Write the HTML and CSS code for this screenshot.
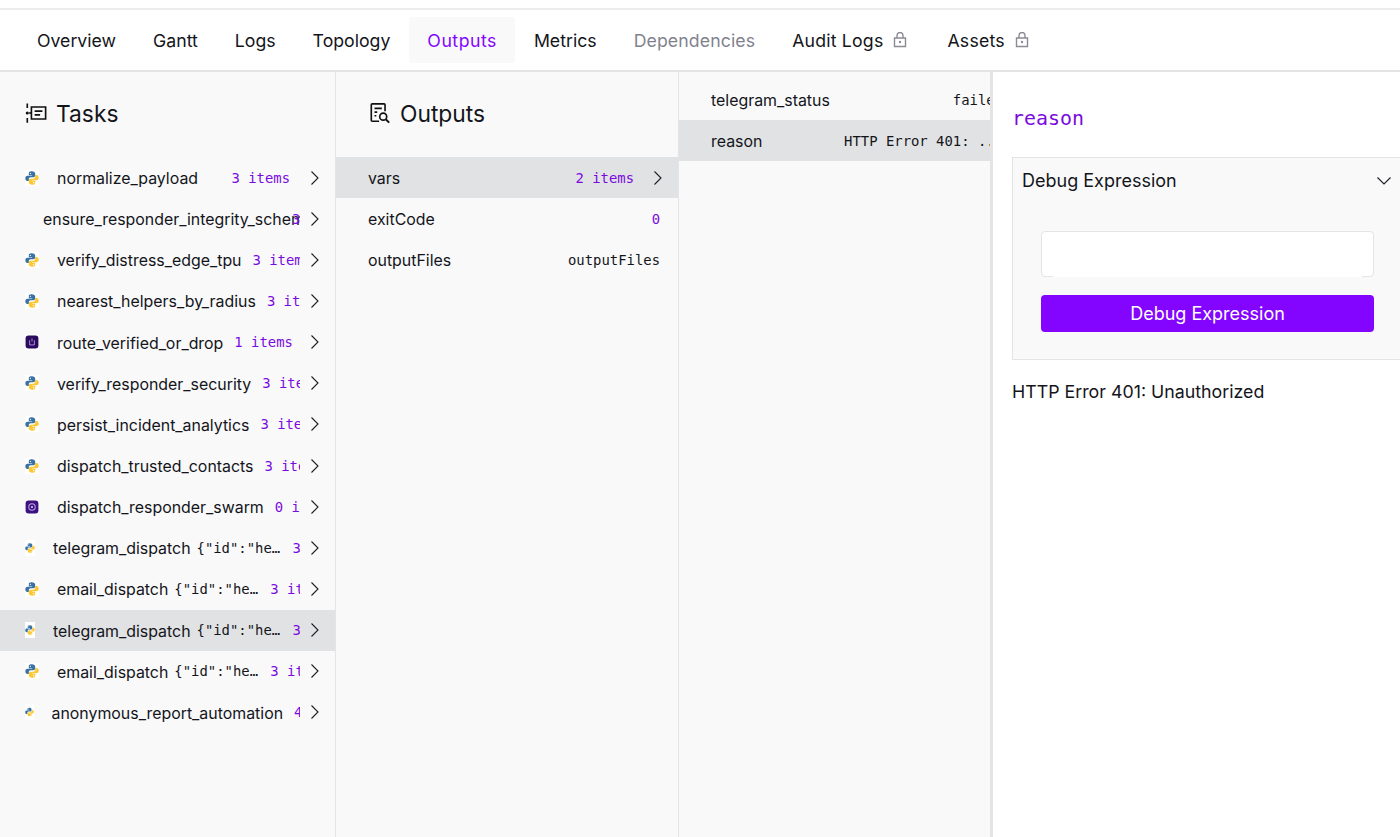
FILE: index.html
```html
<!DOCTYPE html>
<html lang="en">
<head>
    <meta charset="UTF-8">
    <title>Outputs</title>
    <link rel="stylesheet" href="styles.css">
</head>
<body>
    <svg class="defs" width="0" height="0">
        <symbol id="python" viewBox="1 1 22 22">
            <path fill="#3a72a6" d="M12 1.500C7 1.500 7 3.500 7 5v2.500h5.200v1H4.800C2.600 8.500 1.500 10 1.500 12.500s1.100 4.300 3.300 4.300H7v-3c0-1.700 1.300-2.900 3-2.900h4.300c1.500 0 2.700-1.200 2.700-2.700V5c0-1.800-2-3.500-5-3.500zM9.500 3.700a1 1 0 1 1 0 2 1 1 0 0 1 0-2z"/>
            <path fill="#fbc934" transform="rotate(180 12 12)" d="M12 1.500C7 1.500 7 3.500 7 5v2.500h5.200v1H4.800C2.600 8.500 1.500 10 1.500 12.500s1.100 4.300 3.300 4.300H7v-3c0-1.700 1.300-2.900 3-2.900h4.300c1.500 0 2.700-1.200 2.700-2.700V5c0-1.800-2-3.500-5-3.500zM9.500 3.700a1 1 0 1 1 0 2 1 1 0 0 1 0-2z"/>
        </symbol>
        <symbol id="chevron" viewBox="0 0 10 16">
            <path d="M1.500 1.500 8 8l-6.500 6.500" fill="none" stroke="#1c1d22" stroke-width="1.100"/>
        </symbol>
        <symbol id="lock" viewBox="0 0 14 16">
            <path d="M1.500 6h11v8.500h-11zM4 6V3.500a3 3 0 0 1 6 0V6" fill="none" stroke="#8b8b96" stroke-width="1.400"/>
            <circle cx="7" cy="10" r="1.200" fill="#8b8b96"/>
        </symbol>
    </svg>

    <nav class="tabs">
        <a class="tab">Overview</a>
        <a class="tab">Gantt</a>
        <a class="tab">Logs</a>
        <a class="tab">Topology</a>
        <a class="tab active">Outputs</a>
        <a class="tab">Metrics</a>
        <a class="tab disabled">Dependencies</a>
        <a class="tab wide">Audit Logs <svg class="lock"><use href="#lock"/></svg></a>
        <a class="tab wide">Assets <svg class="lock"><use href="#lock"/></svg></a>
    </nav>

    <main class="content">
        <section class="panel tasks">
            <h2 class="panel-title">
                <svg class="title-icon" viewBox="0 0 24 24" fill="none" stroke="#111" stroke-width="1.800">
                    <path d="M2.500 1.500v5M2.500 17.500v5"/>
                    <path d="M7 5.500h15.500v13H7zM10.500 10h8.500M10.500 14h6"/>
                    <circle cx="2.500" cy="12" r="1.700" fill="#111" stroke="none"/>
                    <path d="M4.500 12H7"/>
                </svg>
                Tasks
            </h2>

            <div class="row">
                <svg class="task-icon"><use href="#python"/></svg>
                <div class="row-body">
                    <span class="name">normalize_payload</span>
                    <span class="meta">3 items</span>
                </div>
                <svg class="chevron"><use href="#chevron"/></svg>
            </div>
            <div class="row">
                <div class="task-icon no-icon"></div>
                <div class="row-body">
                    <span class="name overlap">ensure_responder_integrity_schema</span>
                    <span class="meta">3 items</span>
                </div>
                <svg class="chevron"><use href="#chevron"/></svg>
            </div>
            <div class="row">
                <svg class="task-icon"><use href="#python"/></svg>
                <div class="row-body">
                    <span class="name">verify_distress_edge_tpu</span>
                    <span class="meta">3 items</span>
                </div>
                <svg class="chevron"><use href="#chevron"/></svg>
            </div>
            <div class="row">
                <svg class="task-icon"><use href="#python"/></svg>
                <div class="row-body">
                    <span class="name">nearest_helpers_by_radius</span>
                    <span class="meta">3 items</span>
                </div>
                <svg class="chevron"><use href="#chevron"/></svg>
            </div>
            <div class="row">
                <svg class="task-icon" viewBox="0 0 24 24">
                    <rect x="1" y="1" width="22" height="22" rx="5" fill="#2c0a5e"/>
                    <path d="M8 9v8h8V9M12 6v5" fill="none" stroke="#b9a2e8" stroke-width="1.500"/>
                </svg>
                <div class="row-body">
                    <span class="name">route_verified_or_drop</span>
                    <span class="meta">1 items</span>
                </div>
                <svg class="chevron"><use href="#chevron"/></svg>
            </div>
            <div class="row">
                <svg class="task-icon"><use href="#python"/></svg>
                <div class="row-body">
                    <span class="name">verify_responder_security</span>
                    <span class="meta">3 items</span>
                </div>
                <svg class="chevron"><use href="#chevron"/></svg>
            </div>
            <div class="row">
                <svg class="task-icon"><use href="#python"/></svg>
                <div class="row-body">
                    <span class="name">persist_incident_analytics</span>
                    <span class="meta">3 items</span>
                </div>
                <svg class="chevron"><use href="#chevron"/></svg>
            </div>
            <div class="row">
                <svg class="task-icon"><use href="#python"/></svg>
                <div class="row-body">
                    <span class="name">dispatch_trusted_contacts</span>
                    <span class="meta">3 items</span>
                </div>
                <svg class="chevron"><use href="#chevron"/></svg>
            </div>
            <div class="row">
                <svg class="task-icon" viewBox="0 0 24 24">
                    <rect x="1" y="1" width="22" height="22" rx="5" fill="#3d1180"/>
                    <circle cx="12" cy="12" r="5.500" fill="none" stroke="#b9a2e8" stroke-width="1.800"/>
                    <circle cx="12" cy="12" r="1.800" fill="#d9ccf2"/>
                </svg>
                <div class="row-body">
                    <span class="name">dispatch_responder_swarm</span>
                    <span class="meta">0 items</span>
                </div>
                <svg class="chevron"><use href="#chevron"/></svg>
            </div>
            <div class="row">
                <svg class="task-icon narrow"><use href="#python"/></svg>
                <div class="row-body">
                    <span class="name">telegram_dispatch</span>
                    <span class="value">{"id":"health_check"}</span>
                    <span class="meta">3 items</span>
                </div>
                <svg class="chevron"><use href="#chevron"/></svg>
            </div>
            <div class="row">
                <svg class="task-icon"><use href="#python"/></svg>
                <div class="row-body">
                    <span class="name">email_dispatch</span>
                    <span class="value">{"id":"health_check"}</span>
                    <span class="meta">3 items</span>
                </div>
                <svg class="chevron"><use href="#chevron"/></svg>
            </div>
            <div class="row selected">
                <svg class="task-icon narrow"><use href="#python"/></svg>
                <div class="row-body">
                    <span class="name">telegram_dispatch</span>
                    <span class="value">{"id":"health_check"}</span>
                    <span class="meta">3 items</span>
                </div>
                <svg class="chevron"><use href="#chevron"/></svg>
            </div>
            <div class="row">
                <svg class="task-icon"><use href="#python"/></svg>
                <div class="row-body">
                    <span class="name">email_dispatch</span>
                    <span class="value">{"id":"health_check"}</span>
                    <span class="meta">3 items</span>
                </div>
                <svg class="chevron"><use href="#chevron"/></svg>
            </div>
            <div class="row">
                <svg class="task-icon narrower"><use href="#python"/></svg>
                <div class="row-body">
                    <span class="name">anonymous_report_automation</span>
                    <span class="meta">4 items</span>
                </div>
                <svg class="chevron"><use href="#chevron"/></svg>
            </div>
        </section>

        <section class="panel outputs">
            <h2 class="panel-title">
                <svg class="title-icon" viewBox="0 0 24 24" fill="none" stroke="#111" stroke-width="1.800">
                    <path d="M11 21H3.500a1 1 0 0 1-1-1V3a1 1 0 0 1 1-1h13a1 1 0 0 1 1 1v7"/>
                    <path d="M6 7h8M6 11h3M6 15h2"/>
                    <circle cx="15.500" cy="16" r="3.800"/>
                    <path d="m18.500 19 3.500 3.500" stroke-width="2.200"/>
                </svg>
                Outputs
            </h2>

            <div class="row output-row selected">
                <span class="name">vars</span>
                <span class="meta">2 items</span>
                <svg class="chevron"><use href="#chevron"/></svg>
            </div>
            <div class="row output-row">
                <span class="name">exitCode</span>
                <span class="number">0</span>
            </div>
            <div class="row output-row">
                <span class="name">outputFiles</span>
                <span class="plain">outputFiles</span>
            </div>
        </section>

        <section class="panel vars">
            <div class="vars-inner">
                <div class="row output-row">
                    <span class="name">telegram_status</span>
                    <span class="plain">failed</span>
                </div>
                <div class="row output-row selected">
                    <span class="name">reason</span>
                    <span class="plain">HTTP Error 401: ...</span>
                </div>
            </div>
        </section>

        <section class="detail">
            <div class="detail-key">reason</div>
            <div class="debug-box">
                <div class="debug-head">
                    <span>Debug Expression</span>
                    <svg class="debug-chevron" viewBox="0 0 16 10">
                        <path d="M1.500 1.500 8 8l6.500-6.500" fill="none" stroke="#1c1d22" stroke-width="1.100"/>
                    </svg>
                </div>
                <div class="debug-body">
                    <div class="input-wrap">
                        <input class="debug-input" type="text">
                    </div>
                    <button class="debug-btn">Debug Expression</button>
                </div>
            </div>
            <p class="detail-value">HTTP Error 401: Unauthorized</p>
        </section>
    </main>
</body>
</html>
```

FILE: styles.css
```css
* {
    box-sizing: border-box;
}
html, body {
    height: 100%;
}
body {
    margin: 0;
    background-color: #fff;
    color: #14151a;
    font-family: Inter, 'Noto Sans', sans-serif;
    font-size: 15.900px;
    display: flex;
    flex-direction: column;
    overflow: hidden;
}
.defs {
    position: absolute;
}

/* top tabs */
.tabs {
    margin-top: 8px;
    height: 64px;
    border-top: 2px solid #ececee;
    border-bottom: 2px solid #e4e4e6;
    display: flex;
    align-items: center;
    padding-left: 18.500px;
    flex-shrink: 0;
}
.tab {
    height: 46px;
    padding: 0 18.500px;
    display: flex;
    align-items: center;
    font-size: 17.700px;
    border-radius: 4px;
    white-space: nowrap;
}
.tab.active {
    background-color: #f9f9fa;
    color: #8405ff;
    letter-spacing: 0.500px;
}
.tab.disabled {
    color: #82828f;
    letter-spacing: 0.100px;
}
.tab.wide {
    letter-spacing: 0.200px;
}
.lock {
    width: 14px;
    height: 16px;
    margin: 0 3px 0 10px;
}

/* panels */
.content {
    flex: 1;
    display: flex;
    min-height: 0;
}
.panel {
    background-color: #f9f9fa;
    border-right: 1px solid #e4e4e6;
    flex-shrink: 0;
}
.tasks {
    width: 336px;
}
.outputs {
    width: 343px;
}
.vars {
    width: 311px;
    overflow: hidden;
    border-right: 0;
    padding-top: 7px;
}
.vars-inner {
    width: 342px;
}
.panel-title {
    margin: 0;
    height: 85px;
    padding-left: 25px;
    display: flex;
    align-items: center;
    gap: 9px;
    font-size: 22.800px;
    font-weight: 400;
    padding-bottom: 3px;
}
.outputs .panel-title {
    padding-left: 33px;
}
.title-icon {
    width: 22px;
    height: 22px;
}

/* rows */
.row {
    height: 41.150px;
    display: flex;
    align-items: center;
    padding-left: 25px;
}
.row.selected {
    background-color: #e1e2e4;
}
.row-body {
    width: 0;
    flex: 1;
    display: flex;
    justify-content: space-between;
    align-items: center;
    overflow: hidden;
    white-space: nowrap;
}
.task-icon {
    width: 14px;
    height: 16px;
    margin-right: 18px;
    background-color: #fff;
    flex-shrink: 0;
}
.task-icon.narrow {
    width: 10px;
    margin-right: 18px;
}
.task-icon.narrower {
    width: 9px;
    margin-right: 17.500px;
}
.task-icon.no-icon {
    width: 0;
    margin-right: 18px;
    background: none;
}
.name {
    flex-shrink: 0;
    padding-top: 2px;
}
.name.overlap {
    width: 238px;
}
.value, .meta, .number, .plain {
    font-family: 'DejaVu Sans Mono', monospace;
    font-size: 13.900px;
    white-space: nowrap;
}
.value {
    width: 86px;
    margin-left: 6px;
    overflow: hidden;
    text-overflow: ellipsis;
    flex-shrink: 0;
}
.meta {
    color: #7a0be0;
    margin-left: 11px;
    padding-right: 10px;
    flex-shrink: 0;
}
.value + .meta {
    margin-left: 10px;
}
.chevron {
    width: 10px;
    height: 16px;
    margin-left: 10px;
    margin-right: 15px;
    flex-shrink: 0;
}
.output-row {
    padding: 0 18px 0 32px;
    justify-content: space-between;
}
.output-row .meta {
    margin-left: auto;
    padding-right: 0;
}
.output-row .chevron {
    margin: 0 -3px 0 19px;
}
.number {
    color: #7a0be0;
}

/* detail drawer */
.detail {
    flex: 1;
    min-width: 0;
    border-left: 3px solid #e4e4e6;
    padding: 33px 0 0 19px;
}
.detail-key {
    font-family: 'DejaVu Sans Mono', monospace;
    font-size: 19.900px;
    color: #7a0be0;
    line-height: 28px;
}
.debug-box {
    margin-top: 24px;
    width: 400px;
    height: 203px;
    border: 1px solid #e4e4e6;
    background-color: #f9f9fa;
}
.debug-head {
    display: flex;
    align-items: center;
    justify-content: space-between;
    height: 45px;
    padding: 0 0 0 9px;
    font-size: 18px;
    width: 379px;
}
.debug-chevron {
    width: 16px;
    height: 10px;
}
.debug-body {
    padding: 28px 0 0 28px;
    display: flex;
    flex-direction: column;
    gap: 18px;
}
.input-wrap {
    position: relative;
    width: 333px;
    height: 46px;
}
/* white strip that hides the middle of the input's bottom border */
.input-wrap::after {
    content: "";
    position: absolute;
    left: 12px;
    right: 12px;
    bottom: 0;
    height: 1px;
    background-color: #fff;
}
.debug-input {
    display: block;
    width: 100%;
    height: 100%;
    background-color: #fff;
    border: 1px solid #e4e4e6;
    border-radius: 4px;
}
.debug-btn {
    width: 333px;
    height: 37px;
    background-color: #8405ff;
    color: white;
    border: none;
    border-radius: 4px;
    font-family: inherit;
    font-size: 18px;
}
.detail-value {
    margin: 19px 0 0;
    font-size: 17.800px;
    line-height: 26px;
}
```
